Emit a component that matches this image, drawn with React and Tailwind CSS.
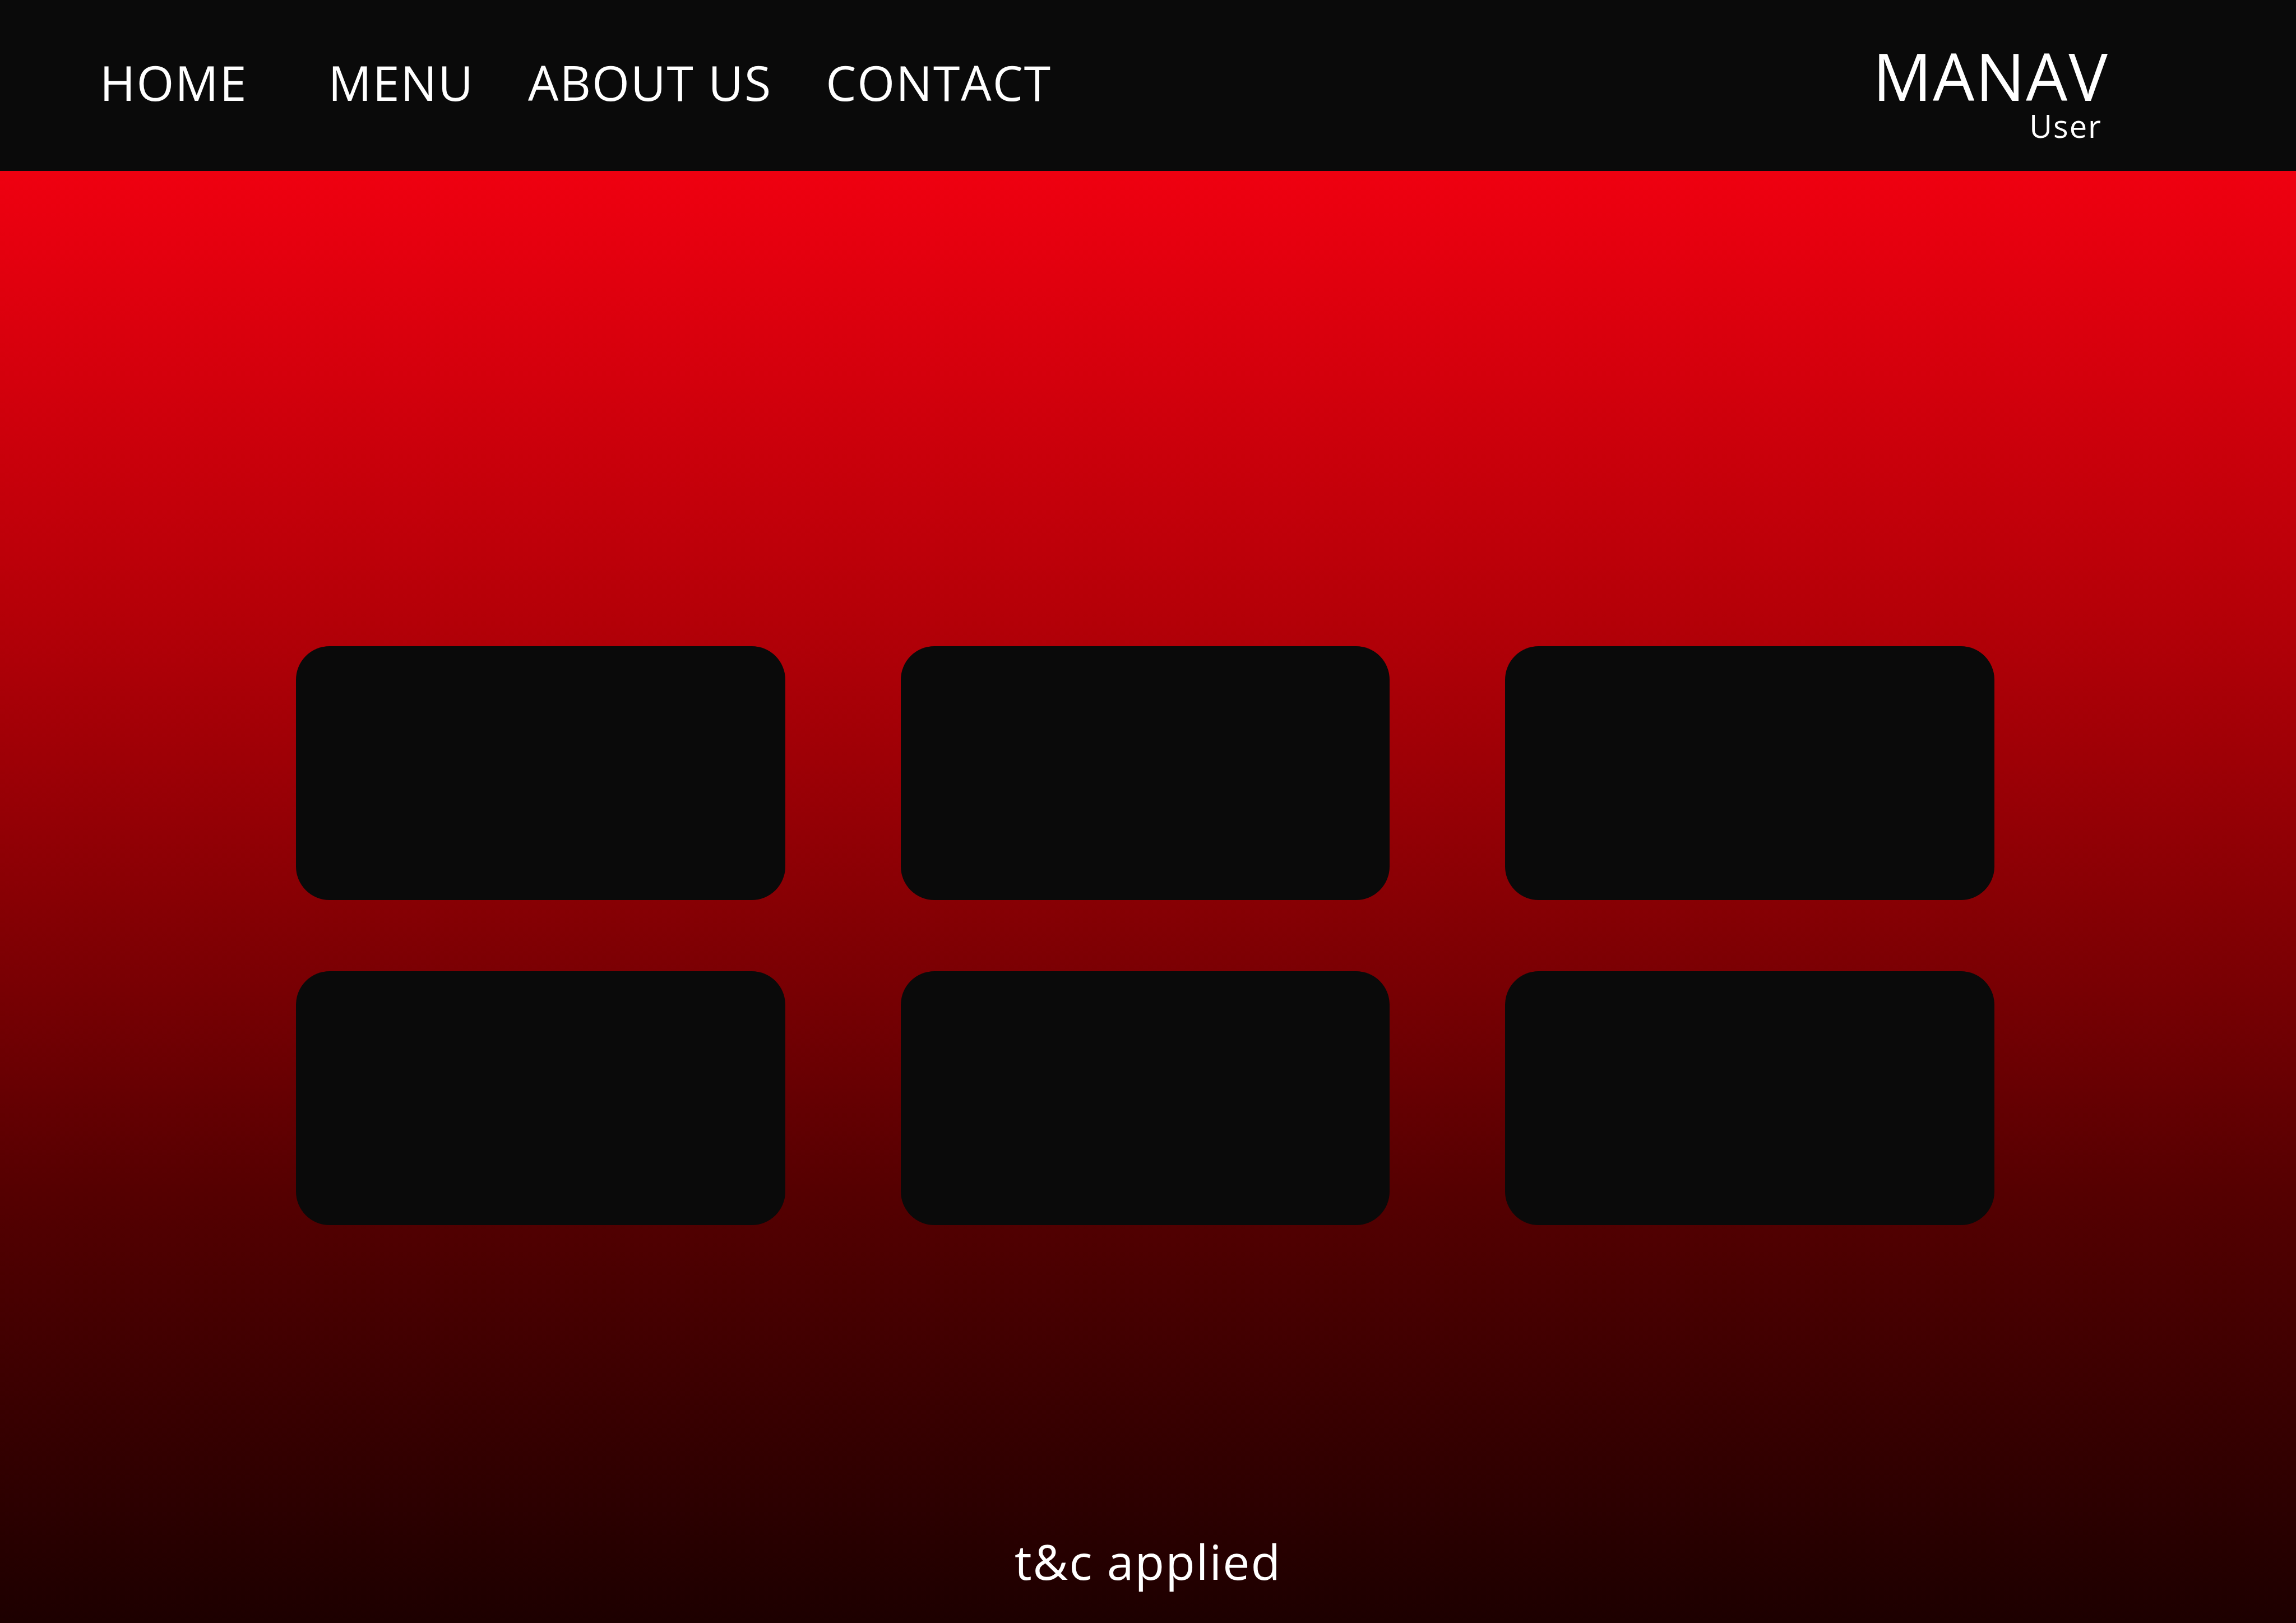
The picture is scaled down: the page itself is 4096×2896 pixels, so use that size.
const links = [
  { label: "HOME", spacing: "mr-[144px]" },
  { label: "MENU", spacing: "mr-[96px]" },
  { label: "ABOUT US", spacing: "mr-[96px]" },
  { label: "CONTACT", spacing: "" },
];

const cards = ["one", "two", "three", "four", "five", "six"];

export default function App() {
  return (
    <div className="flex min-h-screen flex-col bg-[#0a0a0a] font-['Open_Sans',sans-serif] text-white">
      <header className="flex h-[305px] items-baseline justify-between bg-[#0a0a0a] pt-[75px] pr-[334px] pl-[178px]">
        <nav className="flex text-[86px] leading-[120px] tracking-[2px]">
          {links.map((link) => (
            <a key={link.label} href="#" className={link.spacing}>
              {link.label}
            </a>
          ))}
        </nav>
        <div className="flex flex-col items-end">
          <p className="text-[117px] leading-[120px] tracking-[2px]">MANAV</p>
          <p className="pr-[12px] text-[56px] leading-[58px] tracking-[2px]">User</p>
        </div>
      </header>
      <main className="flex flex-1 flex-col bg-[linear-gradient(to_bottom,#ef0010_0%,#b60008_30%,#880004_50%,#560001_70%,#1d0000_100%)]">
        <div className="grid grid-cols-3 gap-x-[206px] gap-y-[127px] pt-[848px] pr-[538px] pl-[528px]">
          {cards.map((card) => (
            <section key={card} className="h-[453px] rounded-[60px] bg-[#0a0a0a]" />
          ))}
        </div>
        <footer className="mt-auto pb-[50px] text-center text-[86px] leading-[120px] tracking-[2px]">
          t&amp;c applied
        </footer>
      </main>
    </div>
  );
}
